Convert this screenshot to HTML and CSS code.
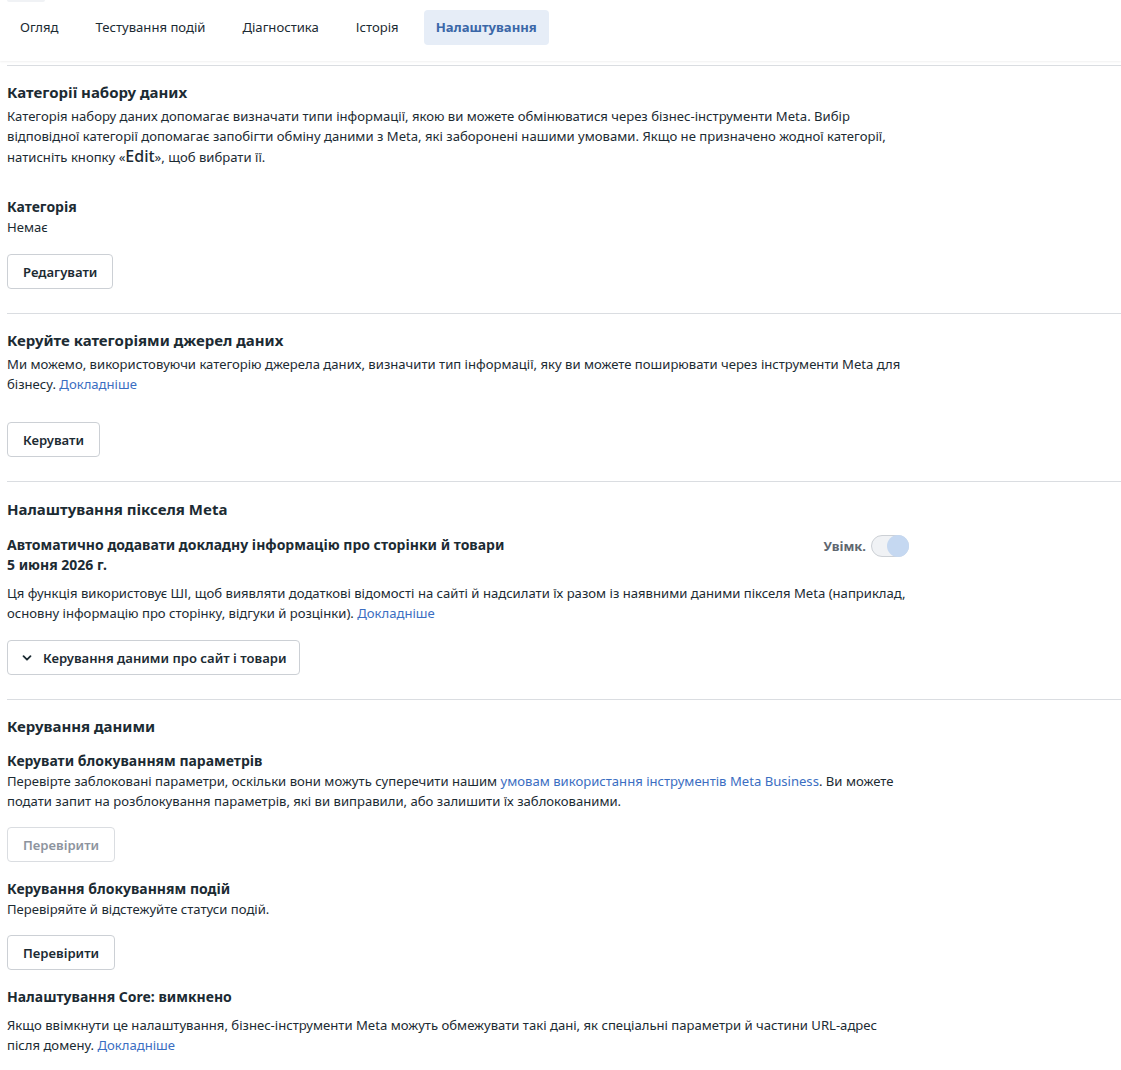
FILE: index.html
```html
<!DOCTYPE html>
<html lang="uk">
<head>
    <meta charset="UTF-8">
    <title>Налаштування</title>
    <link rel="stylesheet" href="styles.css">
</head>
<body>

<div class="scroll-stub"></div>

<!-- Tabs -->
<div class="tab-bar">
    <div class="tab">Огляд</div>
    <div class="tab">Тестування подій</div>
    <div class="tab">Діагностика</div>
    <div class="tab">Історія</div>
    <div class="tab active">Налаштування</div>
</div>

<div class="settings">

    <section class="block">
        <h3>Категорії набору даних</h3>
        <p class="text">Категорія набору даних допомагає визначати типи інформації, якою ви можете обмінюватися через бізнес-інструменти Meta. Вибір відповідної категорії допомагає запобігти обміну даними з Meta, які заборонені нашими умовами. Якщо не призначено жодної категорії, натисніть кнопку «<span class="big">Edit</span>», щоб вибрати її.</p>

        <div class="field">
            <h4>Категорія</h4>
            <p class="text">Немає</p>
        </div>
        <button class="btn">Редагувати</button>
    </section>

    <section class="block">
        <h3>Керуйте категоріями джерел даних</h3>
        <p class="text">Ми можемо, використовуючи категорію джерела даних, визначити тип інформації, яку ви можете поширювати через інструменти Meta для бізнесу. <a href="#">Докладніше</a></p>
        <button class="btn btn-spaced">Керувати</button>
    </section>

    <section class="block">
        <h3 class="semi">Налаштування пікселя Meta</h3>
        <div class="toggle-row">
            <h4>Автоматично додавати докладну інформацію про сторінки й товари<br>5 июня 2026 г.</h4>
            <div class="toggle-wrap">
                <span class="toggle-label">Увімк.</span>
                <span class="toggle"><span class="knob"></span></span>
            </div>
        </div>
        <p class="text">Ця функція використовує ШІ, щоб виявляти додаткові відомості на сайті й надсилати їх разом із наявними даними пікселя Meta (наприклад, основну інформацію про сторінку, відгуки й розцінки). <a href="#">Докладніше</a></p>
        <button class="btn btn-icon">
            <svg width="12" height="12" viewBox="0 0 12 12"><path d="M2.5 4.2 6 7.7l3.5-3.5" fill="none" stroke="#1c2b33" stroke-width="1.8" stroke-linecap="round" stroke-linejoin="round"/></svg>
            Керування даними про сайт і товари
        </button>
    </section>

    <section class="block last">
        <h3>Керування даними</h3>

        <h4 class="sub first">Керувати блокуванням параметрів</h4>
        <p class="text">Перевірте заблоковані параметри, оскільки вони можуть суперечити нашим <a href="#">умовам використання інструментів Meta Business</a>. Ви можете подати запит на розблокування параметрів, які ви виправили, або залишити їх заблокованими.</p>
        <button class="btn" disabled>Перевірити</button>

        <h4 class="sub">Керування блокуванням подій</h4>
        <p class="text">Перевіряйте й відстежуйте статуси подій.</p>
        <button class="btn">Перевірити</button>

        <h4 class="sub">Налаштування Core: вимкнено</h4>
        <p class="text core">Якщо ввімкнути це налаштування, бізнес-інструменти Meta можуть обмежувати такі дані, як спеціальні параметри й частини URL-адрес після домену. <a href="#">Докладніше</a></p>
    </section>

</div>

</body>
</html>
```

FILE: styles.css
```css
body {
    margin: 0;
    font-family: 'Noto Sans', 'Open Sans', sans-serif;
    font-size: 13.1px;
    color: #1c2b33;
    background-color: #fff;
}

.scroll-stub {
    position: absolute;
    top: 0;
    left: 7px;
    width: 38px;
    height: 2px;
    background-color: #f0f2f5;
    border-radius: 0 0 4px 4px;
}

/* Tabs */

.tab-bar {
    display: flex;
    align-items: center;
    gap: 13px;
    padding: 10px 8px 16px;
    box-shadow: 0 1px 2px rgba(0, 0, 0, 0.06);
}

.tab {
    padding: 0 12px;
    height: 35px;
    line-height: 35px;
    border-radius: 4px;
    color: #1c2b33;
}

.tab.active {
    background-color: #e6edf7;
    color: #3b67a8;
    font-weight: bold;
}

/* Content */

.settings {
    padding-left: 7px;
    margin-top: 4px;
}

.block {
    border-top: 1px solid #dadde1;
    padding: 15px 0 24px;
}

.block.last {
    padding-bottom: 10px;
}

.block h3 {
    margin: 0 0 3px;
    font-size: 15px;
    font-weight: bold;
    line-height: 22px;
}

.block h3.semi {
    margin-bottom: 15px;
    margin-top: 1px;
}

.block h4 {
    margin: 0;
    font-size: 14px;
    font-weight: bold;
    line-height: 20px;
}

.text {
    margin: 0;
    max-width: 906px;
    line-height: 20px;
}

.text a {
    color: #3b6ec2;
    text-decoration: none;
}

.text .big {
    font-size: 16px;
    font-weight: 500;
}

.field {
    margin-top: 30px;
    margin-bottom: 17px;
}

.btn {
    display: flex;
    align-items: center;
    gap: 10px;
    height: 35px;
    padding: 0 15px;
    font-family: inherit;
    font-size: 13.1px;
    font-weight: 600;
    color: #1c2b33;
    background-color: #fff;
    border: 1px solid #ccd0d5;
    border-radius: 4px;
    cursor: pointer;
}

.btn:disabled {
    color: #8d949e;
    border-color: #dadde1;
    cursor: default;
}

.text + .btn {
    margin-top: 16px;
}

.text + .btn-spaced {
    margin-top: 28px;
}

.block h4.sub {
    margin-top: 17px;
}

.block h4.sub.first {
    margin-top: 14px;
}

.toggle-row {
    display: flex;
    justify-content: space-between;
    align-items: flex-start;
    max-width: 902px;
    margin-bottom: 8px;
}

.toggle-wrap {
    display: flex;
    align-items: center;
    gap: 5px;
    margin-top: 0;
}

.toggle-label {
    font-weight: bold;
    color: #606770;
    font-size: 13px;
}

.toggle {
    display: flex;
    justify-content: flex-end;
    width: 36px;
    height: 20px;
    border: 1px solid #ccd0d5;
    border-radius: 12px;
    background-color: #f0f2f5;
}

.knob {
    width: 22px;
    height: 22px;
    margin: -1px;
    border-radius: 50%;
    background-color: #c5d8f1;
}

.text + .btn-icon {
    margin-top: 17px;
    padding: 0 12px 0 13px;
}

.text.core {
    margin-top: 8px;
}
```
